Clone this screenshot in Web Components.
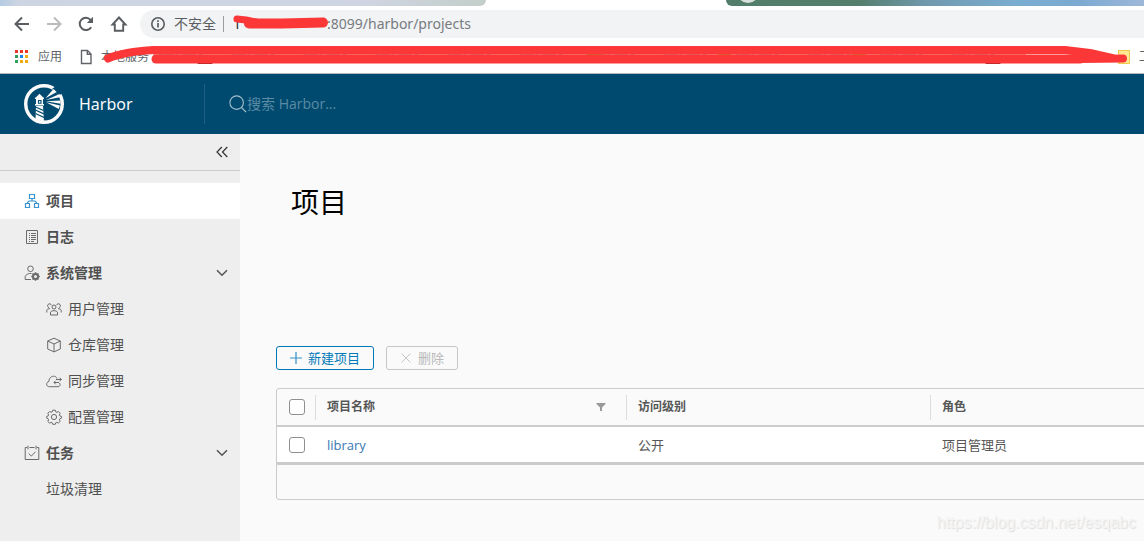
<!DOCTYPE html>
<html lang="zh-CN">
<head>
<meta charset="utf-8">
<title>Harbor</title>
<style>
  body { margin: 0; font-family: "Open Sans", "Noto Sans CJK SC", sans-serif; font-size: 14px; color: #565656; background: #fafafa; overflow: hidden; }
</style>
</head>
<body>
<harbor-app></harbor-app>
<script>
const define = (name, html, setup) => customElements.define(name, class extends HTMLElement {
  connectedCallback() {
    if (this.shadowRoot) return;
    const root = this.attachShadow({ mode: 'open' });
    const t = document.createElement('template');
    t.innerHTML = html;
    root.append(t.content.cloneNode(true));
    if (setup) setup(this, root);
  }
});

/* Icons: [viewBox, markup] */
const ICONS = {
  back: ['0 0 16 16', '<path d="M15 8H2M8 1.5L1.5 8L8 14.5" stroke-width="2"/>'],
  forward: ['0 0 16 16', '<path d="M1 8h13M8 1.5L14.500 8L8 14.500" stroke-width="2"/>'],
  reload: ['0 0 16 16', '<path d="M13.200 11.200A6.200 6.200 0 1 1 12.600 3.800" stroke-width="2"/><path d="M15 .8v6.200H8.800z" fill="currentColor" stroke="none"/>'],
  home: ['0 0 18 18', '<path d="M9 2.500L2.500 9.500h2.300V15.800h8.400V9.500h2.300z" stroke-width="1.900"/>'],
  info: ['0 0 16 16', '<circle cx="8" cy="8" r="6.200" stroke-width="1.600"/><path d="M8 7v4.500M8 4.300v1.700" stroke-width="1.700"/>'],
  page: ['0 0 12 16', '<path d="M1.500 1.500h6l3.500 3.500v9.500h-9.500zM7.300 1.500v3.700H11" stroke-width="1.400"/>'],
  apps: ['0 0 14 14', '<g stroke="none"><path fill="#e8372c" d="M0 0h3v3H0zM5 0h3v3H5zM10 0h3v3h-3z"/><path fill="#2f9e58" d="M0 5h3v3H0zM0 10h3v3H0z"/><path fill="#1a84ee" d="M5 5h3v3H5z"/><path fill="#f2ab0c" d="M10 5h3v3h-3zM5 10h3v3H5zM10 10h3v3h-3z"/></g>'],
  search: ['0 0 20 20', '<circle cx="8.500" cy="8.500" r="7.500" stroke-width="1.200"/><path d="M14 14l5 5" stroke-width="1.400"/>'],
  collapse: ['0 0 12 12', '<path d="M5.800 1L1 6l4.800 5M11.300 1L6.500 6l4.800 5" stroke-width="1.200"/>'],
  chevron: ['0 0 12 8', '<path d="M1 1.200L6 6.200L11 1.200" stroke-width="1.600"/>'],
  projects: ['0 0 16 16', '<path d="M5.500 1.500h5v4h-5zM1.500 10.500h4v4h-4zM10.500 10.500h4v4h-4zM8 5.500v2.500M3.500 10.500v-1l1.500-1.500h6l1.500 1.500v1" stroke-width="1.200"/>'],
  logs: ['0 0 16 16', '<path d="M2.500 1.500h11v13h-11z"/><path d="M5 4.500h1M7 4.500h5M5 6.500h1M7 6.500h5M5 8.500h1M7 8.500h5M5 10.500h1M7 10.500h5M5 12.500h1M7 12.500h3"/>'],
  admin: ['0 0 16 16', '<circle cx="6.500" cy="3.800" r="2.800"/><path d="M7 14.500H1.200v-3c1-2.300 3-3.200 6.300-3"/><circle cx="11.500" cy="11.500" r="2.500" stroke-width="2"/><path d="M11.500 7.200v2M11.500 13.800v2M7.300 11.500h2M13.800 11.500h2M8.500 8.500l1.500 1.500M13 13l1.500 1.500M14.500 8.500L13 10M10 13l-1.500 1.500" stroke-width="1.600"/>'],
  users: ['0 0 16 16', '<circle cx="8" cy="6" r="2"/><path d="M4.500 14v-2.800c1-2 6-2 7 0V14zM5.500 4.200a2 2 0 1 0-2.500 2.500M10.500 4.200a2 2 0 1 1 2.500 2.500M.8 11.500V9.200c.5-1 1.500-1.500 3.200-1.500M15.200 11.500V9.200c-.5-1-1.500-1.500-3.200-1.500"/>'],
  cube: ['0 0 16 16', '<path d="M8 1.200l6.300 2.800v8L8 14.900l-6.300-2.900V4zM1.700 4L8 7l6.300-3M8 7v7.800"/>'],
  cloud: ['0 0 16 16', '<path d="M13.500 10c1.300 1.800.3 3.700-1.500 3.700H3.500C-.3 13.700-.1 9 2.900 8.500 2.800 2.800 9.700 1.600 11 5.500M15.500 6.500H10M13.500 4.700l1.800 1.800-1.800 1.800M13 9.500H8M9.700 7.700L8 9.500l1.700 1.800"/>'],
  gear: ['0 0 16 16', '<circle cx="8" cy="8" r="2.600"/><path d="M6.700 1.200h2.600l.5 1.700 1 .4 1.600-.8 1.800 1.800-.8 1.600.4 1 1.600.5v1.800l-1.600.6-.4 1 .8 1.600-1.800 1.700-1.600-.8-1 .4-.5 1.600H6.700l-.5-1.600-1-.4-1.600.8-1.800-1.700.8-1.600-.4-1-1.500-.6V7.400l1.500-.5.4-1-.8-1.600 1.800-1.800 1.600.8 1-.4z"/>'],
  tasks: ['0 0 16 16', '<path d="M3 2.500H1.200v12h13.600v-12H13M5.500 2.500h5M4 .7v3.600M12 .7v3.600M4.700 8.500l2.600 2.600 4.200-4.300"/>'],
  plus: ['0 0 12 12', '<path d="M6 0v12M0 6h12" stroke-width="1.200"/>'],
  cross: ['0 0 12 12', '<path d="M1.500 1.500l9 9M10.500 1.500l-9 9"/>'],
  filter: ['0 0 10 8', '<path d="M.5 0h9v1L6 4.500V8H4V4.500L.5 1z" fill="currentColor" stroke="none"/>'],
  logo: ['0 0 40 40', '<circle cx="20" cy="20" r="18.300" stroke-width="3.400"/><path d="M32 2l6 7-3 3-7-7z" fill="#004a70" stroke="none"/><g fill="currentColor" stroke="none"><path d="M15.500 9.800L18.800 13v1h-6.600v-1zM11 13.500h9v1.600h-9zM12 15h7v6h-7zM11 20h9v1.500h-9zM12 22h7l1 15.500-8.500-2z"/><path d="M21.500 14.200L29.500 5l3.200 3zM22 16l13.500-6 1.500 3zM22 17.300l14.500-.8v3.200zM22 18.300l14 3.200-1.200 3.500z"/></g><path d="M14.500 16.500h2.500v2.800h-2.500z" stroke="#004a70" stroke-width="1.100"/><path d="M11.500 23l8 3.500M11.500 26l8.500 4M11.500 29.500l8.500 4" stroke="#004a70" stroke-width="1.300"/>']
};
define('ui-icon', `<style>
  :host { display: inline-flex; flex: none; width: var(--w, 16px); height: var(--h, var(--w, 16px)); }
  svg { width: 100%; height: 100%; fill: none; stroke: currentColor; stroke-width: 1; }
</style><svg aria-hidden="true"></svg>`, (el, root) => {
  const [box, markup] = ICONS[el.getAttribute('name')];
  const svg = root.querySelector('svg');
  svg.setAttribute('viewBox', box);
  svg.innerHTML = markup;
});

define('tab-strip', `<style>
  :host { display: flex; justify-content: space-between; height: 6px; background: #fff; overflow: hidden; }
  .left { width: 486px; border-radius: 0 0 6px 0; background: linear-gradient(90deg, #b4cbe3, #ced5e2 4%, #cfd5e2 75%, #c4cec9); }
  .right { flex: 1; margin-left: 240px; border-radius: 0 0 0 8px; background: linear-gradient(90deg, #527d6b, #547f6d 32%, #7199ae 48%, #7aaed1 70%, #7ba9d1 84%, #9db8d9); }
  .dot { width: 22px; height: 22px; margin: -19px 0 0 11px; border-radius: 50%; background: #d9dfdd; }
</style><div class="left"></div><div class="right"><div class="dot"></div></div>`);

define('address-bar', `<style>
  :host { display: flex; align-items: center; height: 36px; padding-left: 14px; background: #fff; color: #5a5d61; }
  button { all: unset; display: flex; margin-right: 16px; }
  button:disabled { color: #b9bbbd; }
  .pill { position: relative; flex: 1; display: flex; align-items: center; box-sizing: border-box; height: 28px; padding-left: 10px; border-radius: 14px 0 0 14px; background: #f1f3f4; margin-left: -4px; line-height: 20px; white-space: nowrap; }
  .state { margin: 0 7px 0 8px; }
  .sep { width: 1px; height: 16px; background: #9b9ea1; margin-right: 9px; }
  .host { width: 94px; color: #202124; }
  .rest { color: #777b80; font-family: "Noto Sans", sans-serif; }
  svg { position: absolute; left: 92px; top: 4px; width: 100px; height: 20px; }
</style>
<button aria-label="后退"><ui-icon name="back"></ui-icon></button>
<button aria-label="前进" disabled><ui-icon name="forward"></ui-icon></button>
<button aria-label="重新加载"><ui-icon name="reload"></ui-icon></button>
<button aria-label="主页"><ui-icon name="home" style="--w:18px"></ui-icon></button>
<div class="pill"><ui-icon name="info"></ui-icon><span class="state">不安全</span><span class="sep"></span><span class="host">1</span><span class="rest">:8099/harbor/projects</span>
<svg viewBox="0 0 100 20" aria-hidden="true" fill="none" stroke="#fc3737" stroke-linecap="round" stroke-linejoin="round"><path d="M5 5L14 6L24 8" stroke-width="7"/><path d="M17 9.500L50 9.500L91 8.500" stroke-width="10"/></svg></div>`);

define('bookmark-bar', `<style>
  :host { position: relative; display: flex; align-items: center; box-sizing: border-box; height: 32px; padding-left: 15px; padding-bottom: 2px; border-bottom: 1px solid #b5b8ba; background: #fff; font-size: 12px; line-height: 18px; overflow: hidden; white-space: nowrap; }
  a { display: flex; align-items: center; gap: 9px; color: #606368; text-decoration: none; margin-right: 18px; }
  .last { width: 26px; margin: 0 0 0 auto; overflow: hidden; }
  .folder { flex: none; width: 10px; height: 12px; border: 1px solid #f0c94e; background: #ffe794; }
  svg { position: absolute; left: 100px; top: 0; width: 1034px; height: 30px; }
</style>
<a href="#apps"><ui-icon name="apps" style="--w:14px"></ui-icon>应用</a>
<a href="#local"><ui-icon name="page" style="--w:12px;--h:16px"></ui-icon>本地服务</a>
<a class="last" href="#folder"><span class="folder"></span>工</a>
<svg viewBox="0 0 1034 30" aria-hidden="true" fill="none" stroke-linecap="round" stroke-linejoin="round">
<path d="M54 12.500H925" stroke="#f48b8d" stroke-width="2"/>
<path d="M60 12H895" stroke="#a8545c" stroke-width="1" stroke-dasharray="4 2 7 3 2 5 12 4 3 30"/>
<path d="M487 12H500M619 12H630M753 12H765" stroke="#b77a24" stroke-width="2"/>
<path d="M98 11.500H112M98 21.500H112M886 11.500H900M886 21.500H900" stroke="#8f1f25" stroke-width="1"/>
<path d="M8 16.500Q24 9.500 54 8H965L990 11L1012 16M980 17L1023 16.500" stroke="#fc3737" stroke-width="8"/>
<path d="M56 17H980" stroke="#fc3737" stroke-width="9"/>
</svg>`);

define('harbor-header', `<style>
  :host { display: flex; align-items: center; height: 60px; padding-left: 24px; background: #004a70; color: #fafafa; }
  .brand { display: flex; align-items: center; gap: 15px; width: 180px; color: inherit; text-decoration: none; font: 16px/24px "Noto Sans", sans-serif; }
  form { display: flex; align-items: center; flex: 1; height: 40px; margin: 0; padding-left: 24px; border-left: 1px solid #1c5f81; color: #a6bfcc; }
  input { flex: 1; min-width: 0; padding: 0; border: 0; outline: 0; background: none; color: #fff; font: inherit; font-size: 14px; line-height: 24px; }
  input::placeholder { color: #5c8ba4; opacity: 1; }
</style>
<a class="brand" href="#home"><ui-icon name="logo" style="--w:40px"></ui-icon>Harbor</a>
<form role="search"><ui-icon name="search" style="--w:18px"></ui-icon><input type="search" aria-label="搜索" placeholder="搜索 Harbor..."></form>`);

define('nav-item', `<style>
  :host { display: block; --pad: 24px; --weight: 700; }
  :host([sub]) { --pad: 46px; --weight: 400; }
  :host([active]) { background: #fff; --tint: #3a93cb; }
  a { display: flex; align-items: center; gap: 6px; height: 36px; padding: 0 12px 0 var(--pad); color: #505050; font-weight: var(--weight); font-size: 14px; line-height: 20px; text-decoration: none; }
  ui-icon { color: var(--tint, #6a6a6a); }
  .arrow { margin-left: auto; color: #565656; --w: 12px; --h: 8px; }
</style><a><slot></slot></a>`, (el, root) => {
  const a = root.querySelector('a');
  a.href = '#' + (el.getAttribute('icon') || 'gc');
  if (el.hasAttribute('icon')) a.insertAdjacentHTML('afterbegin', `<ui-icon name="${el.getAttribute('icon')}"></ui-icon>`);
  if (el.hasAttribute('open')) a.insertAdjacentHTML('beforeend', '<ui-icon class="arrow" name="chevron"></ui-icon>');
});

define('side-nav', `<style>
  :host { display: block; flex: none; width: 240px; background: #eee; }
  .top { display: flex; justify-content: flex-end; align-items: center; height: 36px; padding-right: 12px; border-bottom: 1px solid #ccc; margin-bottom: 12px; }
  button { all: unset; display: flex; color: #333; }
</style>
<div class="top"><button aria-label="收起"><ui-icon name="collapse" style="--w:12px"></ui-icon></button></div>
<nav>
<nav-item icon="projects" active>项目</nav-item>
<nav-item icon="logs">日志</nav-item>
<nav-item icon="admin" open>系统管理</nav-item>
<nav-item icon="users" sub>用户管理</nav-item>
<nav-item icon="cube" sub>仓库管理</nav-item>
<nav-item icon="cloud" sub>同步管理</nav-item>
<nav-item icon="gear" sub>配置管理</nav-item>
<nav-item icon="tasks" open>任务</nav-item>
<nav-item sub>垃圾清理</nav-item>
</nav>`);

define('action-button', `<style>
  :host { display: block; }
  button { display: flex; align-items: center; gap: 6px; box-sizing: border-box; height: 24px; padding: 0 13px; border: 1px solid #0079b8; border-radius: 3px; background: none; color: #0079b8; font: inherit; font-size: 13px; line-height: 20px; }
  button:disabled { border-color: #c6c6c6; color: #b9b9b9; }
  ui-icon { --w: 12px; opacity: .8; }
</style><button type="button"><slot></slot></button>`, (el, root) => {
  const button = root.querySelector('button');
  button.disabled = el.hasAttribute('disabled');
  button.insertAdjacentHTML('afterbegin', `<ui-icon name="${el.getAttribute('icon')}"></ui-icon>`);
});

define('project-grid', `<style>
  :host { display: block; border: 1px solid #ccc; border-radius: 3px; background: #fafafa; }
  table { width: 100%; table-layout: fixed; border-collapse: separate; border-spacing: 0; }
  col.check { width: 38px; } col.name { width: 311px; } col.access { width: 304px; }
  th, td { padding: 0; text-align: left; font-size: 13px; line-height: 20px; }
  th { height: 36px; font-size: 12px; font-weight: 700; border-bottom: 2px solid #ccc; }
  td { height: 35px; background: #fff; border-bottom: 3px solid #ccc; }
  .cell { display: flex; align-items: center; justify-content: space-between; height: 25px; padding: 0 20px 0 12px; }
  th + th .cell { border-left: 1px solid #ddd; padding-left: 11px; }
  th:first-child .cell, td:first-child .cell { padding: 0 0 0 12px; }
  input { appearance: none; width: 16px; height: 16px; margin: 0; border: 1px solid #8f8f8f; border-radius: 3px; background: #fff; }
  a { color: #3a78b5; text-decoration: none; }
  ui-icon { --w: 10px; --h: 8px; color: #999; }
  footer { height: 34px; }
</style>
<table>
<colgroup><col class="check"><col class="name"><col class="access"><col></colgroup>
<thead><tr><th><div class="cell"><input type="checkbox" aria-label="全选"></div></th>
<th><div class="cell">项目名称<ui-icon name="filter"></ui-icon></div></th>
<th><div class="cell">访问级别</div></th><th><div class="cell">角色</div></th></tr></thead>
<tbody><tr><td><div class="cell"><input type="checkbox" aria-label="选择 library"></div></td>
<td><div class="cell"><a href="#library">library</a></div></td>
<td><div class="cell">公开</div></td><td><div class="cell">项目管理员</div></td></tr></tbody>
</table><footer></footer>`);

define('projects-page', `<style>
  :host { display: block; position: relative; flex: 1; min-width: 0; padding: 48px 0 0 36px; overflow: hidden; }
  h1 { margin: 0 0 124px 15px; color: #000; font-size: 28px; font-weight: 400; line-height: 40px; }
  .actions { display: flex; gap: 12px; margin-bottom: 18px; }
  project-grid { margin-right: -24px; }
  .mark { position: absolute; right: 8px; bottom: 8px; color: #f4f4f4; font: 16px/20px "Liberation Sans", sans-serif; text-shadow: 1px 1px 1px #ddd; }
</style>
<h1>项目</h1>
<div class="actions"><action-button icon="plus">新建项目</action-button><action-button icon="cross" disabled>删除</action-button></div>
<project-grid></project-grid>
<div class="mark">https://blog.csdn.net/esqabc</div>`);

define('harbor-app', `<style>
  :host { display: flex; flex-direction: column; min-height: 100vh; }
  .body { display: flex; flex: 1; }
</style>
<tab-strip></tab-strip><address-bar></address-bar><bookmark-bar></bookmark-bar>
<harbor-header></harbor-header>
<div class="body"><side-nav></side-nav><projects-page></projects-page></div>`);
</script>
</body>
</html>
